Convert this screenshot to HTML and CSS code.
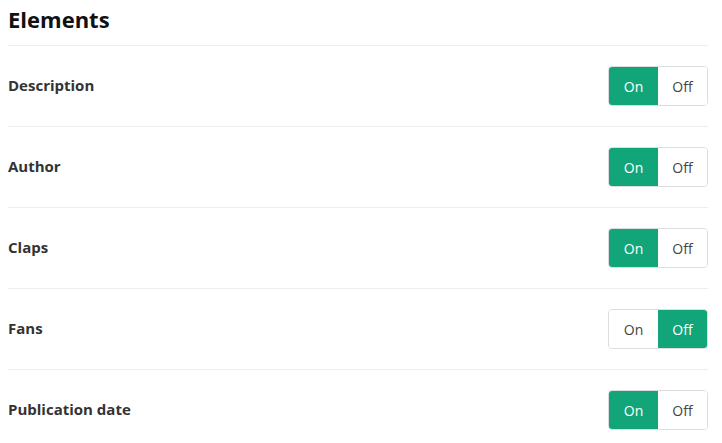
FILE: index.html
```html
<!DOCTYPE html>
<html lang="en">

<head>
  <meta charset="UTF-8">
  <meta name="viewport" content="width=device-width, initial-scale=1.0">
  <title>Elements</title>
  <link rel="stylesheet" href="styles.css">
</head>

<body>
  <div class="container">
    <h2>Elements</h2>
    <div class="row">
      <span class="label">Description</span>
      <div class="toggle">
        <button class="active">On</button>
        <button>Off</button>
      </div>
    </div>
    <div class="row">
      <span class="label">Author</span>
      <div class="toggle">
        <button class="active">On</button>
        <button>Off</button>
      </div>
    </div>
    <div class="row">
      <span class="label">Claps</span>
      <div class="toggle">
        <button class="active">On</button>
        <button>Off</button>
      </div>
    </div>
    <div class="row">
      <span class="label">Fans</span>
      <div class="toggle">
        <button>On</button>
        <button class="active">Off</button>
      </div>
    </div>
    <div class="row">
      <span class="label">Publication date</span>
      <div class="toggle">
        <button class="active">On</button>
        <button>Off</button>
      </div>
    </div>
  </div>
</body>

</html>
```

FILE: styles.css
```css
body {
  margin: 0 8px;
  font-family: "Open Sans", sans-serif;
  color: #333;
  background: #fff;
}

.container {
  width: 700px;
}

h2 {
  margin: 0;
  height: 45px;
  line-height: 38px;
  font-size: 22px;
  font-weight: 700;
  color: #111;
  border-bottom: 1px solid #eee;
}

.row {
  display: flex;
  align-items: center;
  justify-content: space-between;
  height: 80px;
  border-bottom: 1px solid #eee;
}

.row:last-child {
  border-bottom: none;
}

.label {
  margin-top: -2px;
  font-size: 15px;
  font-weight: 700;
  color: #333;
}

.toggle {
  display: flex;
  border: 1px solid #ddd;
  border-radius: 4px;
  overflow: hidden;
}

.toggle button {
  width: 49px;
  height: 38px;
  margin: 0;
  padding: 0;
  border: none;
  background: #fff;
  font-family: "Open Sans", sans-serif;
  font-size: 14px;
  color: #444;
}

.toggle button.active {
  background: #12a57a;
  color: #fff;
}
```
